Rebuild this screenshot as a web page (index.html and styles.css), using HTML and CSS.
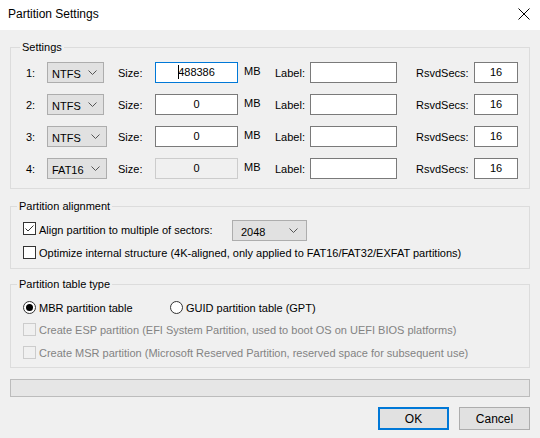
FILE: index.html
```html
<!DOCTYPE html>
<html>
<head>
<meta charset="utf-8">
<link rel="stylesheet" href="styles.css">
</head>
<body>
<div class="window">
  <div class="titlebar">
    <span class="title">Partition Settings</span>
    <svg class="close" width="12" height="12" viewBox="0 0 12 12"><path d="M0.5 0.5 L11.5 11.5 M11.5 0.5 L0.5 11.5" stroke="#000" stroke-width="1" fill="none"/></svg>
  </div>
  <div class="content">
    <fieldset class="group g-settings">
      <legend>Settings</legend>
      <div class="grid">
        <span class="lbl">1:</span>
        <div class="combo"><span>NTFS</span><svg class="chev" width="9" height="5" viewBox="0 0 9 5"><path d="M0.5 0.5 L4.5 4.5 L8.5 0.5" stroke="#555" fill="none"/></svg></div>
        <span class="lbl">Size:</span>
        <div class="edit size focus"><span class="caret"></span>488386</div>
        <span class="lbl mb">MB</span>
        <span class="lbl">Label:</span>
        <div class="edit label"></div>
        <span class="lbl">RsvdSecs:</span>
        <div class="edit rsvd">16</div>

        <span class="lbl">2:</span>
        <div class="combo"><span>NTFS</span><svg class="chev" width="9" height="5" viewBox="0 0 9 5"><path d="M0.5 0.5 L4.5 4.5 L8.5 0.5" stroke="#555" fill="none"/></svg></div>
        <span class="lbl">Size:</span>
        <div class="edit size">0</div>
        <span class="lbl mb">MB</span>
        <span class="lbl">Label:</span>
        <div class="edit label"></div>
        <span class="lbl">RsvdSecs:</span>
        <div class="edit rsvd">16</div>

        <span class="lbl">3:</span>
        <div class="combo wide"><span>NTFS</span><svg class="chev" width="9" height="5" viewBox="0 0 9 5"><path d="M0.5 0.5 L4.5 4.5 L8.5 0.5" stroke="#555" fill="none"/></svg></div>
        <span class="lbl">Size:</span>
        <div class="edit size">0</div>
        <span class="lbl mb">MB</span>
        <span class="lbl">Label:</span>
        <div class="edit label"></div>
        <span class="lbl">RsvdSecs:</span>
        <div class="edit rsvd">16</div>

        <span class="lbl">4:</span>
        <div class="combo wide"><span>FAT16</span><svg class="chev" width="9" height="5" viewBox="0 0 9 5"><path d="M0.5 0.5 L4.5 4.5 L8.5 0.5" stroke="#555" fill="none"/></svg></div>
        <span class="lbl">Size:</span>
        <div class="edit size disabled">0</div>
        <span class="lbl mb">MB</span>
        <span class="lbl">Label:</span>
        <div class="edit label"></div>
        <span class="lbl">RsvdSecs:</span>
        <div class="edit rsvd">16</div>
      </div>
    </fieldset>

    <fieldset class="group g-align">
      <legend>Partition alignment</legend>
      <div class="row r-align">
        <span class="check checked"><svg width="11" height="11" viewBox="0 0 11 11"><path d="M1.5 5.5 L4 8 L9.5 2.5" stroke="#333" stroke-width="1" fill="none"/></svg></span>
        <span class="text">Align partition to multiple of sectors:</span>
        <div class="combo sectors"><span>2048</span><svg class="chev" width="9" height="5" viewBox="0 0 9 5"><path d="M0.5 0.5 L4.5 4.5 L8.5 0.5" stroke="#555" fill="none"/></svg></div>
      </div>
      <div class="row r-opt">
        <span class="check"></span>
        <span class="text">Optimize internal structure (4K-aligned, only applied to FAT16/FAT32/EXFAT partitions)</span>
      </div>
    </fieldset>

    <fieldset class="group g-table">
      <legend>Partition table type</legend>
      <div class="row r-radio">
        <span class="radio on"></span>
        <span class="text mbr">MBR partition table</span>
        <span class="radio gpt"></span>
        <span class="text">GUID partition table (GPT)</span>
      </div>
      <div class="row r-dis">
        <span class="check dis"></span>
        <span class="text dtext">Create ESP partition (EFI System Partition, used to boot OS on UEFI BIOS platforms)</span>
      </div>
      <div class="row r-dis">
        <span class="check dis"></span>
        <span class="text dtext">Create MSR partition (Microsoft Reserved Partition, reserved space for subsequent use)</span>
      </div>
    </fieldset>

    <div class="progress"></div>

    <div class="buttons">
      <div class="btn default">OK</div>
      <div class="btn">Cancel</div>
    </div>
  </div>
</div>
</body>
</html>
```

FILE: styles.css
```css
* { box-sizing: border-box; }
html, body { margin: 0; padding: 0; }
body {
  width: 540px;
  height: 438px;
  font-family: "Liberation Sans", Arial, sans-serif;
  font-size: 11px;
  color: #000;
  background: #f0f0f0;
  overflow: hidden;
}
.window { width: 540px; height: 438px; display: flex; flex-direction: column; }
.titlebar {
  height: 30px;
  background: #fff;
  display: flex;
  align-items: center;
  justify-content: space-between;
  padding: 0 10px 2px 8px;
  flex: none;
}
.title { font-size: 12px; }
.close { display: block; }
.content {
  flex: 1;
  background: #f0f0f0;
  padding: 0 10px;
  display: flex;
  flex-direction: column;
}
.group {
  margin: 0;
  border: 1px solid #dcdcdc;
  padding: 0 0 0 12px;
  min-width: 0;
}
.group legend {
  padding: 0 2px;
  margin-left: -6px;
  line-height: 14px;
  height: 14px;
}
.g-settings { margin-top: 10px; padding-top: 8px; padding-bottom: 9px; padding-left: 15px; }
.grid {
  display: grid;
  grid-template-columns: 21px 71px 37px 89px 31px 35px 106px 58px 44px;
  grid-auto-rows: 21px;
  row-gap: 11px;
  align-items: center;
  justify-items: start;
}
.lbl { line-height: 14px; }
.mb { margin-top: -3px; }
.combo {
  width: 57px;
  height: 21px;
  background: #e1e1e1;
  border: 1px solid #adadad;
  display: flex;
  align-items: center;
  justify-content: space-between;
  padding: 2px 6px 0 4px;
}
.combo.wide { width: 60px; }
.chev { display: block; margin-top: -2px; }
.edit {
  height: 21px;
  background: #fff;
  border: 1px solid #7a7a7a;
  display: flex;
  align-items: center;
  justify-content: center;
  padding-bottom: 1px;
}
.size { width: 83px; }
.label { width: 87px; }
.rsvd { width: 44px; }
.focus { border-color: #0078d7; }
.caret { display: inline-block; width: 1px; height: 14px; background: #000; margin-right: -1px; }
.disabled { background: #f0f0f0; border-color: #cccccc; }

.g-align { margin-top: 10px; padding-top: 7px; padding-bottom: 9px; padding-left: 12px; }
.row { display: flex; align-items: center; }
.r-align { height: 21px; }
.r-opt { height: 13px; margin-top: 5px; }
.check {
  width: 13px; height: 13px;
  border: 1px solid #333;
  background: #fff;
  flex: none;
  display: flex; align-items: center; justify-content: center;
}
.check svg { display: block; }
.check.checked { margin-top: -4px; }
.text { margin-left: 3px; white-space: nowrap; }
.r-align .text { margin-top: -2px; width: 190px; }
.sectors { width: 75px; margin-left: 3px; padding-left: 8px; padding-right: 8px; }

.g-table { margin-top: 8px; padding-top: 10px; padding-bottom: 8px; padding-left: 12px; }
.r-radio { height: 13px; }
.radio {
  width: 13px; height: 13px;
  border-radius: 50%;
  border: 1px solid #333;
  background: #fff;
  flex: none;
  position: relative;
}
.radio.on::after {
  content: "";
  position: absolute;
  left: 2px; top: 2px;
  width: 7px; height: 7px;
  border-radius: 50%;
  background: #000;
}
.text.mbr { width: 131px; }
.r-dis { height: 13px; margin-top: 9px; }
.r-dis + .r-dis { margin-top: 10px; }
.check.dis { border-color: #cccccc; background: #f0f0f0; }
.dtext { color: #838383; }

.progress {
  margin-top: 11px;
  height: 18px;
  background: #e6e6e6;
  border: 1px solid #bcbcbc;
}
.buttons {
  display: flex;
  justify-content: flex-end;
  gap: 10px;
  margin-top: 10px;
}
.btn {
  width: 71px; height: 23px;
  background: #e1e1e1;
  border: 1px solid #adadad;
  display: flex; align-items: center; justify-content: center;
  font-size: 12px;
}
.btn.default { border: 2px solid #0078d7; }
```
